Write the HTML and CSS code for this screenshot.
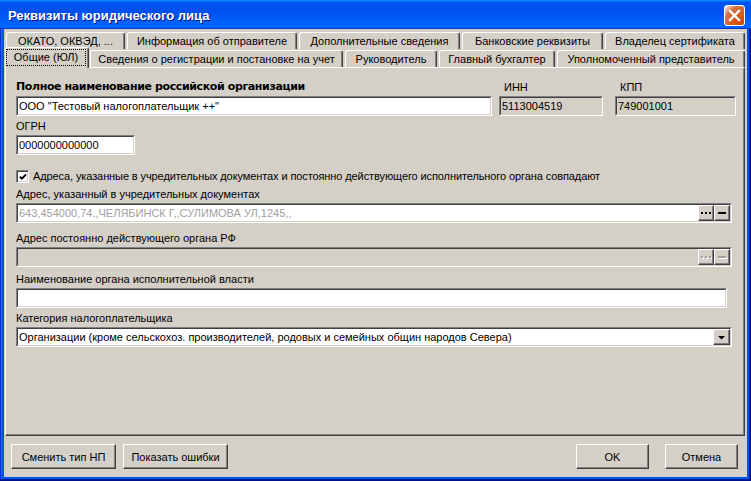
FILE: index.html
```html
<!DOCTYPE html>
<html>
<head>
<meta charset="utf-8">
<title>Реквизиты юридического лица</title>
<link rel="stylesheet" href="styles.css">
</head>
<body>
<div class="window">
  <div class="titlebar">
    <span class="title">Реквизиты юридического лица</span>
    <div class="close">
      <svg width="19" height="19" viewBox="0 0 19 19"><path d="M5 5 L14 14 M14 5 L5 14" stroke="#fff" stroke-width="2.4" stroke-linecap="square"/></svg>
    </div>
  </div>
  <div class="client">
    <div class="tabrow row1">
      <div class="tab t-okato">ОКАТО, ОКВЭД, ...</div>
      <div class="tab t-info">Информация об отправителе</div>
      <div class="tab t-dop">Дополнительные сведения</div>
      <div class="tab t-bank">Банковские реквизиты</div>
      <div class="tab t-owner last">Владелец сертификата</div>
    </div>
    <div class="tabrow row2">
      <div class="tab sel t-common"><span class="focus">Общие (ЮЛ)</span></div>
      <div class="tab t-reg">Сведения о регистрации и постановке на учет</div>
      <div class="tab t-head">Руководитель</div>
      <div class="tab t-acc">Главный бухгалтер</div>
      <div class="tab t-rep last">Уполномоченный представитель</div>
    </div>
    <div class="panel">
      <div class="row-a">
        <div class="field col-name">
          <div class="lbl bold">Полное наименование российской организации</div>
          <div class="box"><div class="box-in"><span class="val">ООО "Тестовый налогоплательщик ++"</span></div></div>
        </div>
        <div class="field col-inn">
          <div class="lbl ind">ИНН</div>
          <div class="box ro"><div class="box-in"><span class="val">5113004519</span></div></div>
        </div>
        <div class="field col-kpp">
          <div class="lbl ind">КПП</div>
          <div class="box ro"><div class="box-in"><span class="val">749001001</span></div></div>
        </div>
      </div>
      <div class="field f-ogrn">
        <div class="lbl">ОГРН</div>
        <div class="box"><div class="box-in"><span class="val">0000000000000</span></div></div>
      </div>
      <div class="check-row">
        <div class="chk"><svg width="11" height="11" viewBox="0 0 11 11"><path d="M2 4.5 L4.2 6.8 L8.8 2.2" fill="none" stroke="#000" stroke-width="2"/></svg></div>
        <span class="chk-lbl">Адреса, указанные в учредительных документах и постоянно действующего исполнительного органа совпадают</span>
      </div>
      <div class="field f-addr1">
        <div class="lbl">Адрес, указанный в учредительных документах</div>
        <div class="box wide"><div class="box-in">
          <span class="val dim">643,454000,74,,ЧЕЛЯБИНСК Г,,СУЛИМОВА УЛ,1245,,</span>
          <div class="ibtn"><svg width="14" height="14" viewBox="0 0 14 14"><rect x="2" y="6" width="2" height="2"/><rect x="6" y="6" width="2" height="2"/><rect x="10" y="6" width="2" height="2"/></svg></div>
          <div class="ibtn"><svg width="14" height="14" viewBox="0 0 14 14"><rect x="3" y="6" width="8" height="2"/></svg></div>
        </div></div>
      </div>
      <div class="field f-addr2">
        <div class="lbl">Адрес постоянно действующего органа РФ</div>
        <div class="box wide ro"><div class="box-in">
          <span class="val"></span>
          <div class="ibtn off"><svg width="14" height="14" viewBox="0 0 14 14"><g fill="#fff"><rect x="3" y="7" width="2" height="2"/><rect x="7" y="7" width="2" height="2"/><rect x="11" y="7" width="2" height="2"/></g><g fill="#a0a0a0"><rect x="2" y="6" width="2" height="2"/><rect x="6" y="6" width="2" height="2"/><rect x="10" y="6" width="2" height="2"/></g></svg></div>
          <div class="ibtn off"><svg width="14" height="14" viewBox="0 0 14 14"><rect x="4" y="7" width="8" height="2" fill="#fff"/><rect x="3" y="6" width="8" height="2" fill="#a0a0a0"/></svg></div>
        </div></div>
      </div>
      <div class="field f-organ">
        <div class="lbl">Наименование органа исполнительной власти</div>
        <div class="box organ"><div class="box-in"><span class="val"></span></div></div>
      </div>
      <div class="field f-cat">
        <div class="lbl">Категория налогоплательщика</div>
        <div class="box wide"><div class="box-in">
          <span class="val">Организации (кроме сельскохоз. производителей, родовых и семейных общин народов Севера)</span>
          <div class="ibtn drop"><svg width="15" height="14" viewBox="0 0 15 14"><path d="M4 6 L11 6 L7.5 9.5 Z"/></svg></div>
        </div></div>
      </div>
    </div>
    <div class="footer">
      <div class="btn-group">
        <div class="btn b-wide">Сменить тип НП</div>
        <div class="btn b-wide">Показать ошибки</div>
      </div>
      <div class="btn-group right">
        <div class="btn b-small">OK</div>
        <div class="btn b-small">Отмена</div>
      </div>
    </div>
  </div>
</div>
</body>
</html>
```

FILE: styles.css
```css
* { box-sizing: border-box; }
html, body { margin: 0; padding: 0; }
body {
  width: 751px;
  height: 481px;
  overflow: hidden;
  background: #ffffff;
  font-family: "Liberation Sans", Arial, sans-serif;
  font-size: 11px;
  color: #000;
}
.window {
  width: 751px;
  height: 481px;
  display: flex;
  flex-direction: column;
  background: #0054e3;
  box-shadow: inset -1px -1px #00138c, inset 1px 1px #0831d9, inset -2px -2px #001ea0, inset 2px 2px #166aee;
}
.titlebar {
  flex: 0 0 29px;
  height: 29px;
  display: flex;
  align-items: center;
  justify-content: space-between;
  padding: 1px 6px 0 8px;
  background: linear-gradient(180deg, #0997ff, #0053ee 8%, #0050ee 40%, #0066ff 88%, #0066ff 93%, #005bff 95%, #003dd7 96%, #003dd7);
}
.title {
  color: #fff;
  font-weight: bold;
  font-size: 13px;
  text-shadow: 1px 1px #0f1089;
}
.close {
  width: 21px;
  height: 21px;
  border: 1px solid #fff;
  border-radius: 3px;
  background: radial-gradient(circle at 90% 90%, #cc4600 0%, #dc6527 55%, #cd7546 70%, #ffccb2 90%, #fff 100%);
  display: flex;
  align-items: center;
  justify-content: center;
}
.close svg { display: block; }
.client {
  flex: 1;
  margin: 0 4px 4px 4px;
  background: #d4d0c8;
  display: flex;
  flex-direction: column;
  padding-top: 3px;
}
.tabrow {
  display: flex;
  height: 17px;
  padding-left: 2px;
}
.row2 {
  margin-top: 1px;
  align-items: flex-end;
  position: relative;
  z-index: 2;
}
.tab {
  flex: 0 0 auto;
  height: 17px;
  margin-right: 2px;
  background: #d4d0c8;
  border-top: 1px solid #fff;
  border-left: 1px solid #fff;
  border-right: 1px solid #404040;
  box-shadow: inset -1px 0 #808080;
  border-radius: 3px 3px 0 0;
  text-align: center;
  line-height: 16px;
  white-space: nowrap;
}
.tab.last { margin-right: 0; }
.t-okato { width: 119px; }
.t-info { width: 170px; }
.t-dop { width: 161px; }
.t-bank { width: 141px; }
.t-owner { width: 140px; }
.t-common { width: 84px; }
.t-reg { width: 253px; }
.t-head { width: 92px; }
.t-acc { width: 116px; }
.t-rep { width: 188px; }
.tab.sel {
  height: 21px;
  margin-left: -1px;
  margin-right: 1px;
  margin-bottom: -1px;
  padding: 0 2px 0 0;
}
.focus {
  display: block;
  margin: 1px 0 0 0;
  height: 17px;
  border: 1px dotted #000;
  line-height: 15px;
}
.panel {
  position: relative;
  z-index: 1;
  margin: 0 2px 0 1px;
  height: 369px;
  flex: 0 0 369px;
  border-top: 1px solid #fff;
  border-left: 1px solid #fff;
  border-right: 1px solid #404040;
  border-bottom: 1px solid #404040;
  box-shadow: inset -1px -1px #808080;
  padding: 12px 0 0 10px;
}
.row-a { display: flex; }
.col-name { width: 476px; }
.col-inn { width: 104px; margin-left: 7px; }
.col-kpp { width: 121px; margin-left: 12px; }
.lbl {
  height: 14px;
  line-height: 14px;
  margin-bottom: 2px;
  white-space: nowrap;
}
.lbl.bold {
  font-family: "DejaVu Sans", "Liberation Sans", sans-serif;
  font-weight: bold;
  font-size: 11px;
  letter-spacing: -0.38px;
}
.lbl.ind { padding-left: 5px; }
.box {
  height: 20px;
  background: #fff;
  border: 1px solid;
  border-color: #808080 #fff #fff #808080;
}
.box-in {
  height: 18px;
  border: 1px solid;
  border-color: #404040 #d4d0c8 #d4d0c8 #404040;
  display: flex;
  align-items: stretch;
  overflow: hidden;
}
.box.ro { background: #d4d0c8; }
.val {
  flex: 1;
  padding-left: 1px;
  line-height: 16px;
  white-space: nowrap;
  overflow: hidden;
}
.val.dim { color: #a0a0a0; }
.f-ogrn { width: 119px; margin-top: 3px; }
.check-row {
  margin-top: 15px;
  height: 13px;
  display: flex;
  align-items: center;
}
.chk {
  width: 13px;
  height: 13px;
  background: #fff;
  border: 1px solid;
  border-color: #808080 #fff #fff #808080;
  box-shadow: inset 1px 1px #404040, inset -1px -1px #d4d0c8;
  display: flex;
  align-items: center;
  justify-content: center;
}
.chk svg { display: block; margin: 1px 0 0 1px; }
.chk-lbl { margin-left: 4px; white-space: nowrap; line-height: 13px; letter-spacing: -0.1px; }
.f-addr1 { margin-top: 4px; }
.f-addr2 { margin-top: 8px; }
.f-organ { margin-top: 5px; }
.f-cat { margin-top: 3px; }
.box.wide { width: 716px; }
.box.organ { width: 711px; }
.ibtn {
  flex: 0 0 16px;
  width: 16px;
  height: 16px;
  background: #d4d0c8;
  border: 1px solid;
  border-color: #fff #404040 #404040 #fff;
  box-shadow: inset -1px -1px #808080;
  display: flex;
  align-items: center;
  justify-content: center;
}
.ibtn svg { display: block; }
.ibtn.drop { flex: 0 0 17px; width: 17px; }
.footer {
  flex: 1;
  display: flex;
  justify-content: space-between;
  padding: 8px 9px 0 7px;
}
.btn-group { display: flex; gap: 7px; }
.btn-group.right { gap: 16px; }
.btn {
  height: 25px;
  background: #d4d0c8;
  border: 1px solid;
  border-color: #fff #404040 #404040 #fff;
  box-shadow: inset -1px -1px #808080;
  display: flex;
  align-items: center;
  justify-content: center;
  white-space: nowrap;
  font-size: 11px;
}
.b-wide { width: 105px; }
.b-small { width: 73px; }
```
